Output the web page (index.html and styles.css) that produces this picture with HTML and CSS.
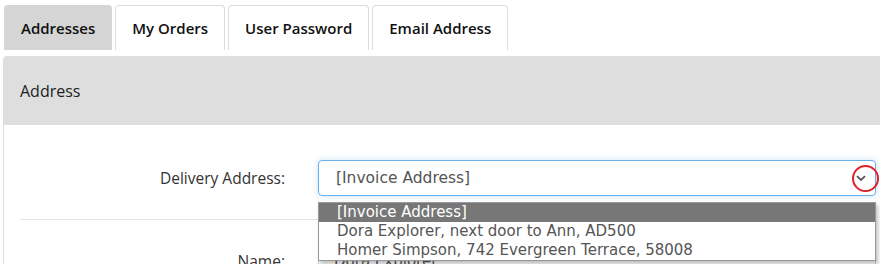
FILE: index.html
```html
<!DOCTYPE html>
<html lang="en">
<head>
  <meta charset="UTF-8" />
  <meta name="viewport" content="width=device-width, initial-scale=1.0" />
  <title>Account</title>
  <link rel="stylesheet" href="styles.css">
</head>
<body>
  <ul class="tabs">
    <li class="tab active">Addresses</li>
    <li class="tab">My Orders</li>
    <li class="tab">User Password</li>
    <li class="tab">Email Address</li>
  </ul>

  <div class="panel">
    <div class="panel-heading">Address</div>
    <div class="panel-body">
      <!-- Delivery address picker -->
      <div class="form-row">
        <label class="form-label">Delivery Address:</label>
        <div class="form-field">
          <div class="select">
            <span class="select-value">[Invoice Address]</span>
            <span class="select-arrow">
              <svg width="10" height="7" viewBox="0 0 10 7"><path d="M1 1.2 L5 5 L9 1.2" fill="none" stroke="#555" stroke-width="1.8"/></svg>
            </span>
            <span class="marker"></span>
          </div>
          <ul class="dropdown">
            <li class="option selected">[Invoice Address]</li>
            <li class="option">Dora Explorer, next door to Ann, AD500</li>
            <li class="option">Homer Simpson, 742 Evergreen Terrace, 58008</li>
          </ul>
        </div>
      </div>

      <hr class="divider">

      <div class="form-row">
        <label class="form-label">Name:</label>
        <div class="form-field">
          <div class="input">Dora Explorer</div>
        </div>
      </div>
    </div>
  </div>
</body>
</html>
```

FILE: styles.css
```css
* {
  box-sizing: border-box;
}
body {
  margin: 0;
  background: #fff;
  font-family: 'Open Sans', sans-serif;
  color: #333;
  height: 264px;
  overflow: hidden;
}

.tabs {
  list-style: none;
  margin: 0;
  padding: 5px 0 0 4px;
  display: flex;
  gap: 3px;
}

.tab {
  height: 45px;
  padding: 0 16px;
  display: flex;
  align-items: center;
  border: 1px solid #ddd;
  border-bottom: none;
  border-radius: 4px 4px 0 0;
  font-size: 15px;
  font-weight: 600;
  color: #111;
  background: #fff;
}

.tab.active {
  background: #d5d5d5;
  border-color: #d5d5d5;
}

.panel {
  margin: 6px 0 0 3px;
  width: 900px;
  border: 1px solid #ddd;
  border-radius: 4px 0 0 0;
}

.panel-heading {
  height: 68px;
  background: #dedede;
  padding: 0 16px;
  display: flex;
  align-items: center;
  font-size: 16px;
  color: #222;
}

.panel-body {
  padding: 35px 0 0 16px;
  height: 160px;
}

.form-row {
  display: flex;
  align-items: center;
}

.form-label {
  width: 298px;
  padding-right: 33px;
  text-align: right;
  font-size: 15.5px;
}

.form-field {
  position: relative;
  width: 558px;
}

.select {
  position: relative;
  height: 36px;
  border: 1px solid #66afe9;
  border-radius: 4px;
  box-shadow: 0 0 6px rgba(102, 175, 233, 0.35);
  display: flex;
  align-items: center;
  padding: 0 17px;
  font-family: 'DejaVu Sans', Verdana, sans-serif;
  font-size: 15.5px;
  color: #555;
}

.select-value {
  flex: 1;
}

.select-arrow {
  display: flex;
  margin-right: -8px;
}

.marker {
  position: absolute;
  right: -4px;
  top: 4px;
  width: 27px;
  height: 27px;
  border: 2px solid #e0202a;
  border-radius: 50%;
}

.dropdown {
  position: absolute;
  top: 42px;
  left: 0;
  right: 0;
  margin: 0;
  padding: 0;
  list-style: none;
  background: #fff;
  border: 1px solid #999;
  box-shadow: 2px 3px 4px rgba(0, 0, 0, 0.25);
  font-family: 'DejaVu Sans', Verdana, sans-serif;
  font-size: 15px;
  color: #555;
  z-index: 10;
}

.option {
  height: 19px;
  line-height: 19px;
  padding: 0 18px;
  white-space: nowrap;
}

.option.selected {
  background: #777;
  color: #fff;
}

.divider {
  border: none;
  border-top: 1px solid #e5e5e5;
  margin: 23px 0 23px 0;
  width: 298px;
}

.input {
  height: 36px;
  border: 1px solid #ccc;
  border-radius: 4px;
  padding: 0 15px;
  display: flex;
  align-items: center;
  font-family: 'DejaVu Sans', Verdana, sans-serif;
  font-size: 15px;
  color: #555;
}
```
